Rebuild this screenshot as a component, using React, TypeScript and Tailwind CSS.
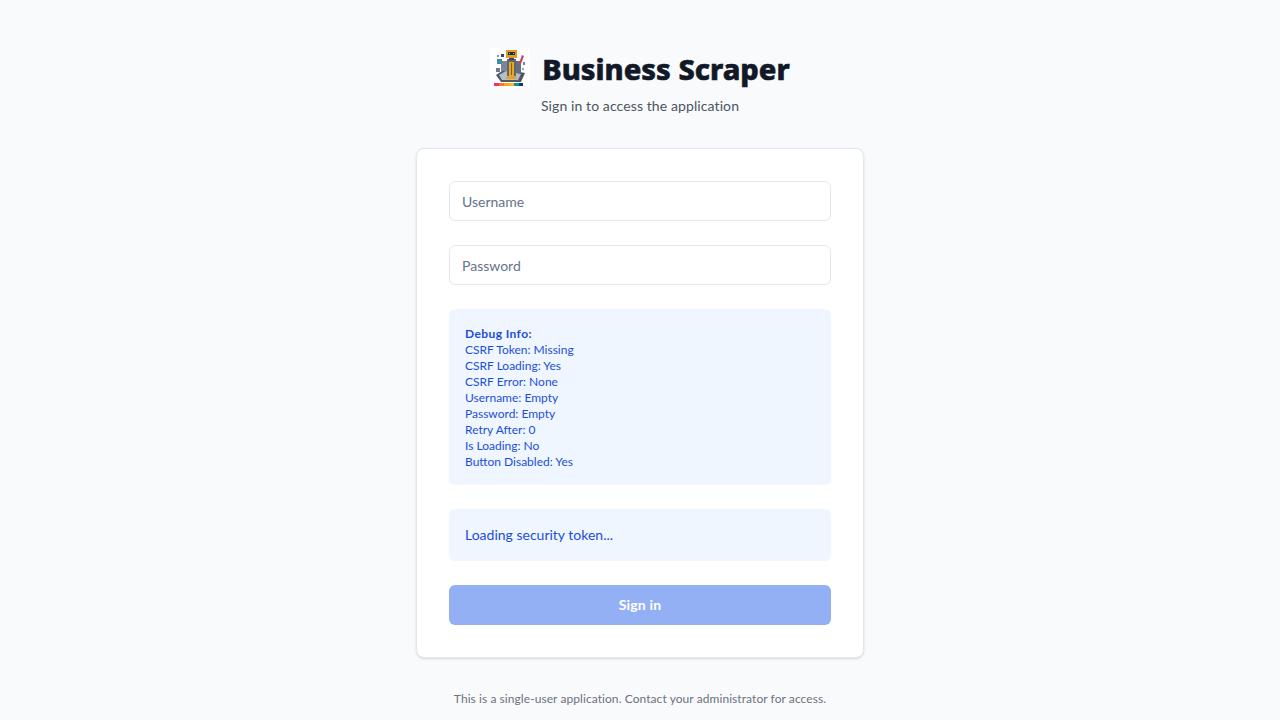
export default function App() {
  const font = { fontFamily: 'Lato, sans-serif' };
  return (
    <div style={font} className="min-h-screen bg-[#f9fafb] flex flex-col items-center pt-[48px]">
      <div className="flex items-center justify-center gap-3 h-[40px]">
        <svg width="40" height="40" viewBox="0 0 40 40" className="bg-white">
          <polygon points="6,27 15,21 35,25 31,34 11,34" fill="#4d5866" />
          <polygon points="9,27 16,23 31,26 28,32 12,32" fill="#b5bdc8" />
          <polygon points="18,27 25,27 27,31 16,31" fill="#e9a21f" />
          <rect x="11" y="13" width="6" height="10" fill="#7d8794" />
          <rect x="25" y="13" width="6" height="12" fill="#666f7c" />
          <rect x="17" y="11" width="9" height="17" fill="#5d6673" />
          <rect x="19" y="14" width="5" height="14" fill="#eba81f" />
          <rect x="21" y="15" width="1" height="12" fill="#8a5a12" />
          <rect x="16" y="2" width="11" height="8" fill="#e59a22" />
          <rect x="18" y="4" width="7" height="3" fill="#1f2d44" />
          <rect x="19" y="5" width="1" height="1" fill="#7fd4ea" />
          <rect x="23" y="5" width="1" height="1" fill="#7fd4ea" />
          <rect x="19" y="10" width="5" height="2" fill="#3d4552" />
          <polygon points="29,15 32,7 34,8 31,16" fill="#cf3f68" />
          <rect x="7" y="11" width="5" height="5" fill="#3f8fa3" />
          <rect x="6" y="20" width="4" height="4" fill="#6c7c8c" />
          <rect x="11" y="6" width="3" height="3" fill="#2f4a66" />
          <rect x="7" y="7" width="2" height="2" fill="#8a94a3" />
          <rect x="33" y="14" width="2" height="3" fill="#7b8494" />
          <rect x="32" y="20" width="2" height="2" fill="#9aa3af" />
          <rect x="4" y="35" width="5" height="3" fill="#e8365d" />
          <rect x="9" y="35" width="5" height="3" fill="#f3713d" />
          <rect x="14" y="35" width="5" height="3" fill="#f9a51a" />
          <rect x="19" y="35" width="5" height="3" fill="#f6b82e" />
          <rect x="24" y="35" width="5" height="3" fill="#0f8f9c" />
          <rect x="29" y="35" width="4" height="3" fill="#0c3c57" />
        </svg>
        <h1 className="font-['Noto_Sans',sans-serif] text-[29px] leading-[36px] font-extrabold text-[#111827] pt-[2px] [-webkit-text-stroke:0.6px_#111827]">Business Scraper</h1>
      </div>
      <p className="mt-2 text-sm leading-5 text-[#4b5563] tracking-[0.1px]">Sign in to access the application</p>
      <div className="mt-8 w-[448px] bg-white border border-[#e2e8f0] rounded-lg shadow-sm p-8 flex flex-col gap-6">
        <input placeholder="Username" className="h-10 w-full border border-[#e2e8f0] rounded-md px-3 text-sm placeholder:text-[#64748b] outline-none" />
        <input placeholder="Password" className="h-10 w-full border border-[#e2e8f0] rounded-md px-3 text-sm placeholder:text-[#64748b] outline-none" />
        <div className="bg-[#eff6ff] rounded-md pt-[17px] pb-[15px] px-4 text-xs leading-4 text-[#1d4ed8]">
          <div className="font-bold tracking-[0.4px]">Debug Info:</div>
          <div>CSRF Token: Missing</div>
          <div>CSRF Loading: Yes</div>
          <div>CSRF Error: None</div>
          <div>Username: Empty</div>
          <div>Password: Empty</div>
          <div>Retry After: 0</div>
          <div>Is Loading: No</div>
          <div>Button Disabled: Yes</div>
        </div>
        <div className="bg-[#eff6ff] rounded-md p-4 text-sm leading-5 text-[#1d4ed8]">Loading security token...</div>
        <button className="h-10 w-full rounded-md bg-[#93b0f5] text-white text-sm font-bold tracking-[0.2px]">Sign in</button>
      </div>
      <p className="mt-[33px] text-xs leading-4 text-[#6b7280] tracking-[0.07px]">This is a single-user application. Contact your administrator for access.</p>
    </div>
  );
}
